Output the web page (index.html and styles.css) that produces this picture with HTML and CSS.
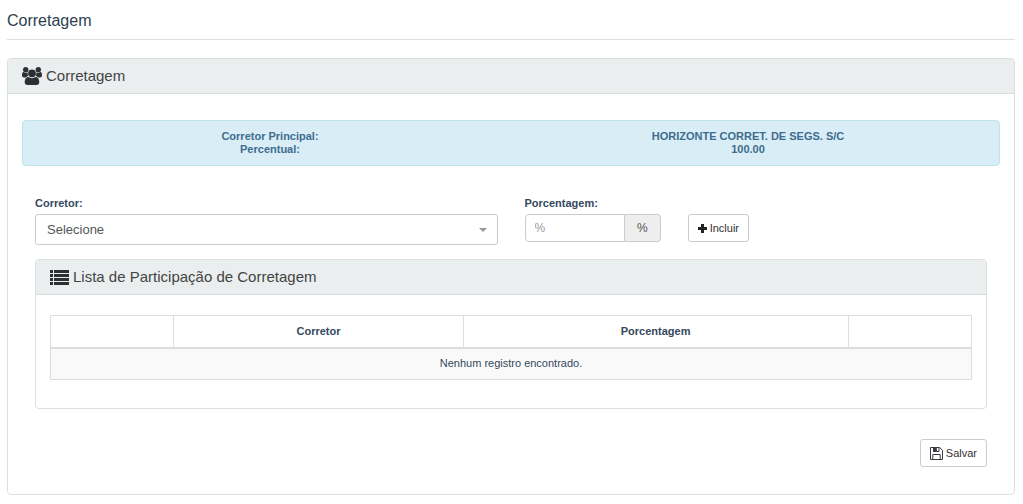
FILE: index.html
```html
<!DOCTYPE html>
<html lang="pt-BR">
<head>
<meta charset="utf-8">
<meta name="viewport" content="width=device-width, initial-scale=1">
<title>Corretagem</title>
<link rel="stylesheet" href="styles.css">
</head>
<body>
<main class="page">
  <h1 class="page-title">Corretagem</h1>
  <section class="panel">
    <h2 class="panel-heading">
      <svg class="icon-users" viewBox="0 0 20 18" aria-hidden="true">
        <circle cx="3.700" cy="2.700" r="2.700"/><circle cx="16.300" cy="2.700" r="2.700"/>
        <path d="M0 8.600C0 6.500.5 5.100 1.400 5.100c1.500 1 3 1 4.300.3C5.500 6.800 5.800 8 6.400 9 5.400 9 4.600 9.600 4 10.500H2C.7 10.500 0 9.800 0 8.600zM20 8.600c0-2.100-.5-3.500-1.400-3.500-1.500 1-3 1-4.300.3.200 1.400-.1 2.600-.7 3.600 1 0 1.800.6 2.400 1.500h2c1.300 0 2-.7 2-1.900z"/>
        <circle cx="10" cy="6.300" r="3.900"/>
        <path d="M6.400 10c2.200 1.500 5 1.500 7.200 0 2.400 0 3.700 2.400 3.700 5.200 0 1.700-1.100 2.800-2.800 2.800h-9c-1.700 0-2.800-1.100-2.800-2.800 0-2.800 1.300-5.200 3.700-5.200z"/>
      </svg>
      Corretagem
    </h2>
    <div class="panel-body">
      <dl class="summary">
        <dt>Corretor Principal:</dt><dd>HORIZONTE CORRET. DE SEGS. S/C</dd>
        <dt>Percentual:</dt><dd>100.00</dd>
      </dl>
      <div class="content">
        <form class="form-row">
          <div class="field field-broker">
            <label for="corretor">Corretor:</label>
            <div class="select-wrap">
              <select id="corretor"><option>Selecione</option></select>
            </div>
          </div>
          <div class="field field-percent">
            <label for="porcentagem">Porcentagem:</label>
            <div class="input-group">
              <input id="porcentagem" type="text" placeholder="%">
              <span class="addon">%</span>
            </div>
          </div>
          <button class="btn" type="button">
            <svg class="icon-plus" viewBox="0 0 9 9" aria-hidden="true"><path d="M3 0h3v3h3v3H6v3H3V6H0V3h3z"/></svg>
            Incluir
          </button>
        </form>
        <section class="panel">
          <h2 class="panel-heading">
            <svg class="icon-list" viewBox="0 0 19 15" aria-hidden="true"><path d="M0 0h3v3H0zM4 0h15v3H4zM0 4h3v3H0zM4 4h15v3H4zM0 8h3v3H0zM4 8h15v3H4zM0 12h3v3H0zM4 12h15v3H4z"/></svg>
            Lista de Participação de Corretagem
          </h2>
          <div class="list-body">
            <table class="table">
              <colgroup><col class="col-edge"><col class="col-broker"><col class="col-percent"><col class="col-edge"></colgroup>
              <thead><tr><th></th><th>Corretor</th><th>Porcentagem</th><th></th></tr></thead>
              <tbody><tr><td colspan="4">Nenhum registro encontrado.</td></tr></tbody>
            </table>
          </div>
        </section>
        <div class="actions">
          <button class="btn" type="button">
            <svg class="icon-save" viewBox="0 0 13 13" aria-hidden="true"><path d="M.5.5h9.200l2.800 2.800v9.200H.5zM3.500.5v4h5.500v-4M2.800 12.500v-5h7.400v5"/><path class="solid" d="M3.500.5h2.800v4H3.500z"/></svg>
            Salvar
          </button>
        </div>
      </div>
    </div>
  </section>
</main>
</body>
</html>
```
FILE: styles.css
```css
* {
  box-sizing: border-box;
}

body {
  margin: 0;
  background: #fff;
  color: #34495e;
  font-family: "Liberation Sans", Arial, sans-serif;
  font-size: 11px;
  line-height: 13px;
}

.page {
  padding: 0 8px 8px 7px;
}

.page-title {
  margin: 0 0 18px;
  padding: 11px 0 8px;
  border-bottom: 1px solid #dcdfe0;
  color: #2c3e50;
  font-size: 16px;
  font-weight: 400;
  line-height: 20px;
}

.panel {
  border: 1px solid #dcdfe0;
  border-radius: 4px;
}

.panel-heading {
  display: flex;
  align-items: center;
  gap: 4px;
  margin: 0;
  padding: 8px 14px;
  border-bottom: 1px solid #d5dcdc;
  border-radius: 3px 3px 0 0;
  background: #ebeeef;
  color: #444;
  font-size: 15px;
  font-weight: 400;
  line-height: 18px;
}

.panel-heading svg {
  fill: #2d3032;
}

.icon-users {
  width: 20px;
  height: 18px;
}

.icon-list {
  width: 19px;
  height: 15px;
}

.panel-body {
  padding: 26px 14px 27px;
}

.summary {
  display: grid;
  grid-template-columns: 1fr 1fr;
  margin: 0 0 31px;
  padding: 9px 12px 9px 8px;
  border: 1px solid #bce4e9;
  border-radius: 4px;
  background: #d9edf7;
  color: #3d6c8d;
  font-weight: 700;
  text-align: center;
}

.summary dd {
  margin: 0;
}

.content {
  padding: 0 13px;
}

.form-row {
  display: grid;
  grid-template-columns: repeat(12, minmax(0, 1fr));
  column-gap: 27px;
  margin-bottom: 14px;
}

.field label {
  display: block;
  margin-bottom: 4px;
  font-weight: 700;
}

.field-broker {
  grid-column: span 6;
}

.field-percent {
  grid-column: span 2;
}

.select-wrap {
  position: relative;
}

.select-wrap::after {
  content: "";
  position: absolute;
  top: 14px;
  right: 11px;
  border: 4px solid transparent;
  border-top-color: #999;
  border-bottom: 0;
  pointer-events: none;
}

select {
  display: block;
  width: 100%;
  height: 31px;
  padding: 0 11px;
  border: 1px solid #ccc;
  border-radius: 3px;
  appearance: none;
  background: #fff;
  color: #555;
  font: 13px "Liberation Sans", Arial, sans-serif;
}

.input-group {
  display: flex;
  height: 28px;
}

.input-group input {
  flex: 1;
  min-width: 0;
  padding: 0 9px;
  border: 1px solid #ccc;
  border-radius: 4px 0 0 4px;
  color: #555;
  font: 12px "Liberation Sans", Arial, sans-serif;
}

.input-group input::placeholder {
  color: #999;
}

.addon {
  display: flex;
  align-items: center;
  padding: 0 12px;
  border: 1px solid #ccc;
  border-left: 0;
  border-radius: 0 4px 4px 0;
  background: #eee;
  color: #555;
  font-size: 12px;
}

.btn {
  display: flex;
  align-items: center;
  gap: 3px;
  height: 28px;
  padding: 0 9px;
  border: 1px solid #ccc;
  border-radius: 3px;
  background: #fff;
  color: #333;
  font: 11px "Liberation Sans", Arial, sans-serif;
  white-space: nowrap;
}

.form-row .btn {
  justify-self: start;
  margin-top: 17px;
}

.icon-plus {
  width: 9px;
  height: 9px;
  fill: #222;
}

.icon-save {
  width: 13px;
  height: 13px;
  fill: none;
  stroke: #3a3a42;
}

.icon-save .solid {
  fill: #3a3a42;
}

.list-body {
  padding: 20px 14px 28px;
}

.table {
  width: 100%;
  border: 1px solid #ddd;
  border-collapse: collapse;
  table-layout: fixed;
}

.col-edge {
  width: 13.4%;
}

.col-broker {
  width: 31.4%;
}

.table th,
.table td {
  height: 32px;
  padding: 0;
  border: 1px solid #ddd;
  text-align: center;
}

.table th {
  border-bottom-width: 2px;
}

.table td {
  background: #f9f9f9;
}

.actions {
  display: flex;
  justify-content: flex-end;
  padding-top: 30px;
}
```
